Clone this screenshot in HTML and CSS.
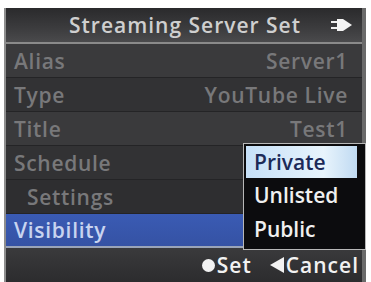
FILE: index.html
```
<!DOCTYPE html>
<html>
<head>
<meta charset="utf-8">
<link rel="stylesheet" href="styles.css">
</head>
<body>
<div class="frame">
  <div class="screen">
    <div class="header">
      <span class="title">Streaming Server Set</span>
      <svg class="icon" width="22" height="14" viewBox="0 0 22 14">
        <rect x="0" y="3" width="6" height="2" fill="#f0f0f0"/>
        <rect x="0" y="9" width="6" height="2" fill="#f0f0f0"/>
        <path d="M6 1 H12 L21 7 L12 13 H6 Z" fill="#f4f4f4"/>
      </svg>
    </div>
    <div class="list">
      <div class="row"><span>Alias</span><span>Server1</span></div>
      <div class="row alt"><span>Type</span><span>YouTube Live</span></div>
      <div class="row"><span>Title</span><span>Test1</span></div>
      <div class="row alt"><span>Schedule</span><span></span></div>
      <div class="row sub"><span>Settings</span><span></span></div>
      <div class="row sel"><span>Visibility</span><span></span></div>
    </div>
    <div class="footer">
      <span class="btn"><span class="dot"></span>Set</span>
      <span class="btn"><svg class="tri" width="14" height="16" viewBox="0 0 14 16"><path d="M0 8 L14 0 V16 Z" fill="#f2f2f2"/></svg>Cancel</span>
    </div>
    <div class="menu">
      <div class="opt hl">Private</div>
      <div class="opt">Unlisted</div>
      <div class="opt">Public</div>
    </div>
  </div>
</div>
</body>
</html>
```
FILE: styles.css
```
html, body {
  margin: 0;
  padding: 0;
  background: #ffffff;
}
body {
  font-family: "Open Sans", "DejaVu Sans", sans-serif;
}
.frame {
  margin: 8px 0 0 4px;
  width: 362px;
  height: 274px;
  background: #8e8e8e;
  padding-left: 2px;
  box-sizing: border-box;
}
.screen {
  position: relative;
  width: 356px;
  height: 274px;
  background: #2e2e30;
  border-right: 4px solid #6a6a6a;
  display: flex;
  flex-direction: column;
}
.header {
  height: 34px;
  background: linear-gradient(#2a2a2c, #3c3c3e 60%, #4a4a4c);
  border-bottom: 2px solid #8a8a8a;
  display: flex;
  align-items: center;
  justify-content: flex-end;
  padding-right: 9px;
  gap: 30px;
}
.title {
  color: #cfcfcf;
  font-size: 21px;
  font-weight: 600;
  letter-spacing: 1px;
}
.icon {
  display: block;
}
.list {
  display: flex;
  flex-direction: column;
}
.row {
  height: 33px;
  border-bottom: 1px solid #242426;
  background: #3a3a3c;
  display: flex;
  align-items: center;
  justify-content: space-between;
  padding: 0 14px 0 8px;
  color: #78787a;
  font-size: 21px;
  font-weight: 600;
  letter-spacing: 0.7px;
}
.row.alt {
  background: #323234;
}
.row.sub {
  padding-left: 21px;
  background: #2e2e30;
}
.row.sel {
  background: linear-gradient(#3a5bb4, #3552a4);
  color: #c8d4f0;
  border-bottom: 2px solid #9aa4b8;
  height: 32px;
}
.footer {
  flex: 1;
  background: linear-gradient(#3a3a3c, #2c2c2e);
  display: flex;
  align-items: center;
  justify-content: flex-end;
  gap: 18px;
  padding-right: 3px;
  color: #f2f2f2;
  font-size: 21px;
  font-weight: 600;
  letter-spacing: 1px;
}
.btn {
  display: flex;
  align-items: center;
}
.dot {
  width: 13px;
  height: 13px;
  border-radius: 50%;
  background: #f2f2f2;
  margin-right: 2px;
}
.tri {
  display: block;
  margin-right: 2px;
}
.menu {
  position: absolute;
  left: 237px;
  top: 135px;
  width: 111px;
  height: 103px;
  background: #0c0c0e;
  border: 1px solid #b8b8b8;
  padding: 2px 8px 0 2px;
  box-sizing: content-box;
  display: flex;
  flex-direction: column;
}
.opt {
  height: 34px;
  line-height: 34px;
  padding-left: 8px;
  color: #f0f0f0;
  font-size: 21px;
  font-weight: 600;
}
.opt.hl {
  background: linear-gradient(90deg, #c6e0f8, #e8f4fc 70%, #c0daf2);
  color: #1c2a58;
  height: 32px;
  line-height: 32px;
}
```
